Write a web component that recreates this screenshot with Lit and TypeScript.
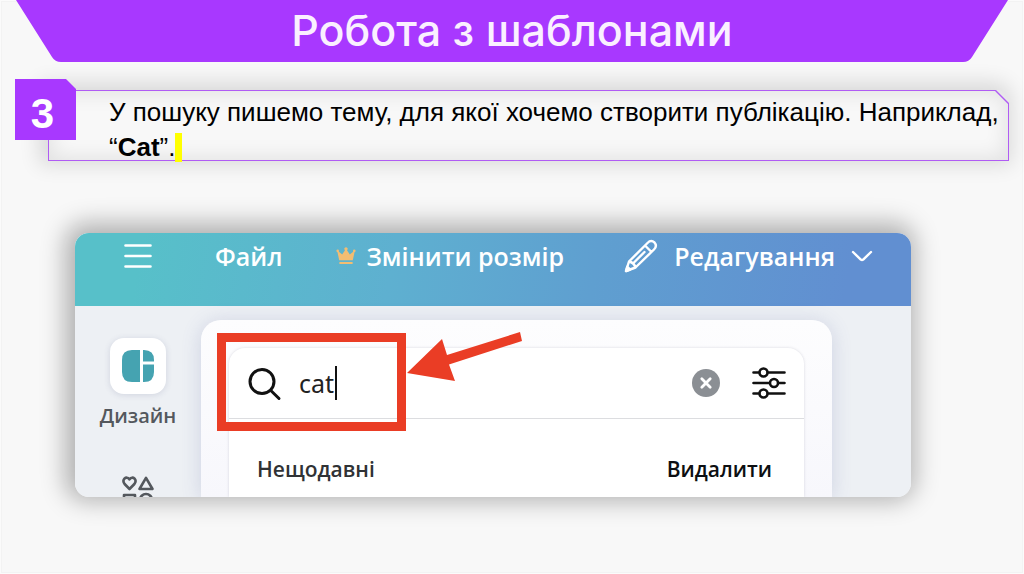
import { LitElement, html, css } from "lit";
import { customElement, property } from "lit/decorators.js";

@customElement("slide-banner")
class SlideBanner extends LitElement {
  static styles = css`
    :host {
      display: flex;
      height: 62px;
      padding: 0 16px;
    }
    .cap {
      flex: none;
      width: 50px;
      height: 62px;
      fill: #a838ff;
    }
    .title {
      flex: 1;
      margin: 0 -1px;
      background: #a838ff;
      color: #faf0ff;
      font: 500 43px/60px Inter, sans-serif;
      text-align: center;
      white-space: nowrap;
    }
  `;
  @property() heading = "";
  render() {
    return html`
      <svg class="cap" viewBox="0 0 50 62" aria-hidden="true"><path d="M0 0H50V62H45Q39 62 36 57Z" /></svg>
      <h1 class="title">${this.heading}</h1>
      <svg class="cap" viewBox="0 0 50 62" aria-hidden="true"><path d="M50 0H0V62H5Q11 62 14 57Z" /></svg>
    `;
  }
}

@customElement("slide-step")
class SlideStep extends LitElement {
  static styles = css`
    :host {
      display: grid;
      grid-template-columns: 33px 28px 1fr;
      grid-template-rows: 11px 50px auto;
      padding: 17px 15px 0 15px;
      font-family: "Liberation Sans", Arial, sans-serif;
    }
    .number {
      grid-area: 1 / 1 / 3 / 3;
      z-index: 1;
      display: grid;
      place-items: center;
      padding: 8px 6px 0 0;
      background: #a838ff;
      clip-path: polygon(0 0, calc(100% - 10px) 0, 100% 10px, 100% 100%, 0 100%);
      color: #fff;
      font-size: 42px;
      font-weight: 700;
      line-height: 48px;
    }
    .frame {
      grid-area: 2 / 2 / 4 / 4;
      position: relative;
      padding: 5px 8px 0 61px;
      border-top-right-radius: 12px;
      box-shadow: -3px -2px 20px 6px rgba(0, 0, 0, 0.12), inset 0 0 20px 4px rgba(0, 0, 0, 0.09);
    }
    .frame::before {
      content: "";
      position: absolute;
      inset: 0;
      background: #b05cf4;
      clip-path: polygon(
        evenodd,
        0 0, calc(100% - 13px) 0, 100% 13px, 100% 100%, 0 100%, 0 0,
        1px 1px, calc(100% - 14px) 1px, calc(100% - 1px) 14px, calc(100% - 1px) calc(100% - 1px), 1px calc(100% - 1px), 1px 1px
      );
    }
    .text {
      position: relative;
      margin: 0 0 -4px;
      color: #000;
      font-size: 26px;
      line-height: 35px;
    }
    .mark {
      display: inline-block;
      width: 7px;
      height: 29px;
      vertical-align: -6px;
      background: #ff0;
    }
  `;
  @property({ type: Number }) number = 0;
  render() {
    return html`
      <div class="number">${this.number}</div>
      <div class="frame">
        <p class="text">
          У пошуку пишемо тему, для якої хочемо створити публікацію. Наприклад, “<strong>Cat</strong>”.<span class="mark"></span>
        </p>
      </div>
    `;
  }
}

@customElement("editor-preview")
class EditorPreview extends LitElement {
  static styles = css`
    :host {
      display: block;
      position: relative;
      border-radius: 14px;
      box-shadow: -3px -3px 24px 7px rgba(0, 0, 0, 0.29);
      font-family: "Open Sans", "Noto Sans", sans-serif;
    }
    .card {
      overflow: hidden;
      border-radius: 14px;
      background: #edf0f4;
    }
    button {
      display: flex;
      align-items: center;
      margin: 0;
      padding: 0;
      border: 0;
      background: none;
      color: inherit;
      font: inherit;
      white-space: nowrap;
    }
    svg {
      display: block;
      flex: none;
      fill: none;
      stroke: currentColor;
    }
    .bar {
      display: flex;
      align-items: center;
      height: 46px;
      padding: 0 38px 27px 49px;
      background: linear-gradient(100deg, #57c0c9 8%, #5eb0d0 38%, #5f9fd0 62%, #618fd1 92%);
      color: #fff;
      font-size: 25px;
      font-weight: 600;
    }
    .file {
      margin: 0 54px 0 63px;
    }
    .resize {
      gap: 10px;
    }
    .edit {
      gap: 16px;
      margin-left: auto;
    }
    .body {
      display: grid;
      grid-template-columns: 126px 1fr 79px;
      height: 191px;
    }
    .side {
      display: flex;
      flex-direction: column;
      align-items: center;
      padding-top: 32px;
      overflow: hidden;
      color: #54585d;
    }
    .design {
      flex-direction: column;
      gap: 8px;
      font-size: 20px;
      font-weight: 600;
      line-height: 28px;
    }
    .tile {
      display: grid;
      place-items: center;
      width: 56px;
      height: 56px;
      border-radius: 14px;
      background: #fff;
      box-shadow: 0 1px 6px rgba(60, 70, 120, 0.16);
    }
    .shapes {
      margin-top: 46px;
    }
    .panel {
      margin-top: 14px;
      padding: 28px 28px 0;
      border-radius: 20px 20px 0 0;
      background: linear-gradient(#fdfdfe, #f7f7fc);
      box-shadow: 0 2px 20px rgba(80, 90, 160, 0.2);
    }
    .results {
      height: 100%;
      border-radius: 16px 16px 0 0;
      background: #fff;
      box-shadow: 0 0 3px rgba(60, 60, 90, 0.18);
    }
    .search {
      display: flex;
      align-items: center;
      height: 70px;
      padding: 0 18px;
      border-bottom: 1px solid #dcdde0;
      color: #111;
    }
    .query {
      width: 36px;
      margin: 0 0 0 17px;
      padding: 0;
      border: 0;
      outline: 0;
      background: none;
      color: #222;
      font: 400 25px/32px "Noto Sans", sans-serif;
    }
    .caret {
      width: 2px;
      height: 34px;
      background: #111;
    }
    .clear {
      margin: 0 32px 0 auto;
    }
    .recent {
      display: flex;
      justify-content: space-between;
      padding: 35px 32px 0 28px;
      color: #303235;
      font-size: 21px;
      font-weight: 600;
      line-height: 30px;
    }
    .heading {
      margin: 0;
      font: inherit;
    }
    .delete {
      color: #0d0f12;
    }
    .focus {
      position: absolute;
      left: 142px;
      top: 100px;
      width: 171px;
      height: 80px;
      border: 9px solid #ea3d25;
      pointer-events: none;
    }
    .arrow {
      position: absolute;
      left: 331px;
      top: 98px;
      pointer-events: none;
    }
  `;
  render() {
    return html`
      <div class="card">
        <div class="bar">
          <button aria-label="Меню">
            <svg width="28" height="26" viewBox="0 0 28 26" stroke-width="2.6" stroke-linecap="round">
              <path d="M1.5 2.5H26.5M1.5 13H26.5M1.5 23.5H26.5" />
            </svg>
          </button>
          <button class="file">Файл</button>
          <button class="resize">
            <svg width="20" height="18" viewBox="0 0 20 18">
              <path
                d="M3.2 13.2L1.5 5.2Q.3 4.9.4 3.6.8 2.4 2.1 2.6 3.3 3.1 2.9 4.7L6.2 7.5 9 3.2Q7.8 2.1 8.6.9 10 -.3 11.4.9 12.2 2.1 11 3.2L13.8 7.5 17.1 4.7Q16.7 3.1 17.9 2.6 19.2 2.4 19.6 3.6 19.7 4.9 18.5 5.2L16.8 13.2ZM3.4 15H16.6V17H3.4Z"
                fill="#f3bd72"
                stroke="none"
              />
            </svg>
            Змінити розмір
          </button>
          <button class="edit">
            <svg width="34" height="34" viewBox="0 0 34 34" stroke-width="2.4" stroke-linejoin="round" stroke-linecap="round">
              <path d="M2 32L5 22.5 23.500 4Q27 .5 30.500 3.500 33.500 7 30 10.500L11.500 28.500ZM5 22.500Q10 23.500 11.500 28.500M21 6.500L27.500 13M9 24.500L20.500 13" />
              <path d="M2 32L3.200 27.800 6.200 30.500Z" fill="currentColor" />
            </svg>
            Редагування
            <svg width="22" height="14" viewBox="0 0 22 14" stroke-width="2.4" stroke-linecap="round" stroke-linejoin="round">
              <path d="M2 3L9.800 10.600Q11 11.600 12.200 10.600L20 3" />
            </svg>
          </button>
        </div>
        <div class="body">
          <nav class="side">
            <button class="design">
              <span class="tile">
                <svg width="32" height="32" viewBox="0 0 32 32">
                  <path
                    d="M18 0V32H10Q0 32 0 22V10Q0 0 10 0ZM21 0H22Q32 0 32 10V11.500H21ZM21 14.500H32V22Q32 32 22 32H21Z"
                    fill="#45a3b1"
                    stroke="none"
                  />
                </svg>
              </span>
              Дизайн
            </button>
            <button class="shapes" aria-label="Елементи">
              <svg width="32" height="32" viewBox="0 0 32 32" stroke-width="2.600" stroke-linejoin="round">
                <path
                  d="M7.500 13L2.600 8Q.4 5.200 2.300 2.800 5 .3 7.500 3.300 10 .3 12.700 2.800 14.600 5.200 12.400 8ZM24 1.800L30.500 13H17.500ZM2 19H13V30H2Z"
                />
                <circle cx="24" cy="24" r="6" />
              </svg>
            </button>
          </nav>
          <div class="panel">
            <div class="results">
              <div class="search">
                <svg width="35" height="35" viewBox="0 0 35 35" stroke-width="3" stroke-linecap="round">
                  <circle cx="15" cy="15.500" r="12" />
                  <path d="M23.800 24.500L32 32.500" />
                </svg>
                <input class="query" aria-label="Пошук" value="cat" />
                <span class="caret"></span>
                <button class="clear" aria-label="Очистити">
                  <svg width="28" height="28" viewBox="0 0 28 28">
                    <circle cx="14" cy="14" r="14" fill="#8b8f94" stroke="none" />
                    <path d="M9.800 9.800L18.200 18.200M18.200 9.800L9.800 18.200" stroke="#fff" stroke-width="2.800" stroke-linecap="round" />
                  </svg>
                </button>
                <button aria-label="Фільтри">
                  <svg width="34" height="32" viewBox="0 0 34 32" stroke-width="2.600" stroke-linecap="round">
                    <path d="M1.500 5.500H7M16 5.500H32.500M1.500 16H17.500M26.500 16H32.500M1.500 26.500H7M16 26.500H32.500" />
                    <circle cx="11.500" cy="5.500" r="4" />
                    <circle cx="22" cy="16" r="4" />
                    <circle cx="11.500" cy="26.500" r="4" />
                  </svg>
                </button>
              </div>
              <div class="recent">
                <h2 class="heading">Нещодавні</h2>
                <button class="delete">Видалити</button>
              </div>
            </div>
          </div>
        </div>
      </div>
      <div class="focus"></div>
      <svg class="arrow" width="118" height="52" viewBox="0 0 118 52" aria-hidden="true">
        <path d="M1 42L36 8 41 24 114 1 116 10 43 33.500 49 50Z" fill="#ea3d25" stroke="none" />
      </svg>
    `;
  }
}

@customElement("app-root")
class AppRoot extends LitElement {
  static styles = css`
    :host {
      display: block;
      box-sizing: border-box;
      min-height: 100vh;
      background: #f8f8f8;
      box-shadow: inset 0 0 0 1px #fbfbfb, inset 0 0 0 2px #f3f3f3;
    }
    .preview {
      margin: 72px 113px 0 75px;
    }
  `;
  render() {
    return html`
      <slide-banner heading="Робота з шаблонами"></slide-banner>
      <slide-step number="3"></slide-step>
      <editor-preview class="preview"></editor-preview>
    `;
  }
}
